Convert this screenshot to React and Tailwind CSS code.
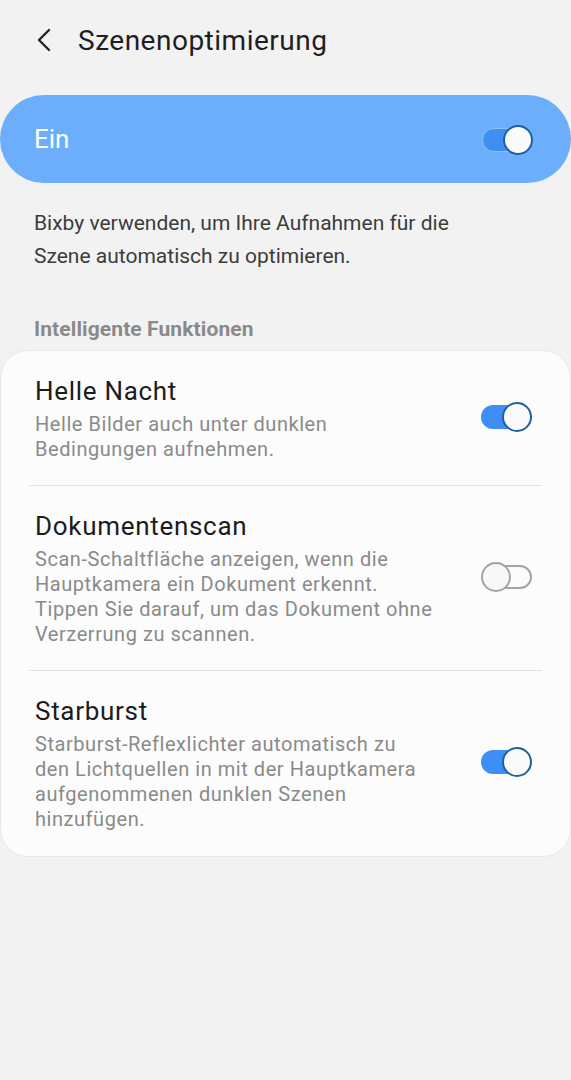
import React from "react";

function Toggle({ on }) {
  if (on) {
    return (
      <div className="relative w-[51px] h-[30px] shrink-0 -mt-[5px]">
        <div className="absolute left-0 top-[3px] w-[46px] h-[24px] rounded-full bg-[#3e8ef7]" />
        <div className="absolute right-0 top-0 w-[30px] h-[30px] rounded-full bg-[#fafafa] border-[2px] border-[#1f5f9e]" />
      </div>
    );
  }
  return (
    <div className="relative w-[51px] h-[30px] shrink-0 -mt-[5px]">
      <div className="absolute right-0 top-[3px] w-[46px] h-[24px] rounded-full bg-[#fbfbfb] border-[2px] border-[#a4a4a4]" />
      <div className="absolute left-0 top-0 w-[30px] h-[30px] rounded-full bg-[#f8f8f8] border-[2px] border-[#a4a4a4]" />
    </div>
  );
}

function Item({ title, lines, on, divider }) {
  return (
    <div className="relative flex items-center pl-[34px] pr-[38px] pt-[25px] pb-[24px]">
      <div className="flex-1">
        <div className="text-[26px] leading-[30px] tracking-[0.7px] text-[#1c1c1c]">{title}</div>
        <div className="mt-[6px] text-[20px] leading-[25px] tracking-[0.55px] text-[#8a8a8a]">
          {lines.map((l, i) => (
            <div key={i} className="whitespace-nowrap">{l}</div>
          ))}
        </div>
      </div>
      <Toggle on={on} />
      {divider && <div className="absolute left-[28px] right-[28px] bottom-0 h-px bg-[#e3e3e3]" />}
    </div>
  );
}

export default function App() {
  return (
    <div className="w-[571px] h-[1080px] bg-[#f2f2f2] font-['Roboto',sans-serif] overflow-hidden">
      <div className="flex items-center h-[82px] pl-[36px]">
        <svg width="16" height="24" viewBox="0 0 16 24" className="mr-[26px] -mt-[2px]">
          <path d="M13 2 L3 12 L13 22" fill="none" stroke="#222" strokeWidth="2.4" strokeLinecap="round" strokeLinejoin="round" />
        </svg>
        <div className="text-[28px] tracking-[0.5px] text-[#1f1f1f] -mt-[1px]">Szenenoptimierung</div>
      </div>
      <div className="mt-[13px] h-[88px] rounded-full bg-[#6caefb] flex items-center justify-between pl-[34px] pr-[38px]">
        <div className="text-[26px] text-white">Ein</div>
        <div className="relative w-[51px] h-[30px] shrink-0 mt-[2px]">
          <div className="absolute left-0 top-[3px] w-[46px] h-[24px] rounded-full bg-[#3f8ff3] border border-[#8cc0f7]" />
          <div className="absolute right-0 top-0 w-[30px] h-[30px] rounded-full bg-[#fafafa] border-[2px] border-[#1f5f9e]" />
        </div>
      </div>
      <div className="mt-[24px] px-[34px] text-[21px] leading-[33px] text-[#3c3c3c]">
        Bixby verwenden, um Ihre Aufnahmen für die
        <br />
        Szene automatisch zu optimieren.
      </div>
      <div className="mt-[43px] px-[34px] text-[21px] leading-[26px] font-bold text-[#8a8a8a] tracking-[0.1px]">
        Intelligente Funktionen
      </div>
      <div className="mt-[8px] bg-[#fcfcfc] rounded-[28px] border border-[#e8e8e8]">
        <Item
          title="Helle Nacht"
          lines={["Helle Bilder auch unter dunklen", "Bedingungen aufnehmen."]}
          on
          divider
        />
        <Item
          title="Dokumentenscan"
          lines={[
            "Scan-Schaltfläche anzeigen, wenn die",
            "Hauptkamera ein Dokument erkennt.",
            "Tippen Sie darauf, um das Dokument ohne",
            "Verzerrung zu scannen.",
          ]}
          on={false}
          divider
        />
        <Item
          title="Starburst"
          lines={[
            "Starburst-Reflexlichter automatisch zu",
            "den Lichtquellen in mit der Hauptkamera",
            "aufgenommenen dunklen Szenen",
            "hinzufügen.",
          ]}
          on
        />
      </div>
    </div>
  );
}
